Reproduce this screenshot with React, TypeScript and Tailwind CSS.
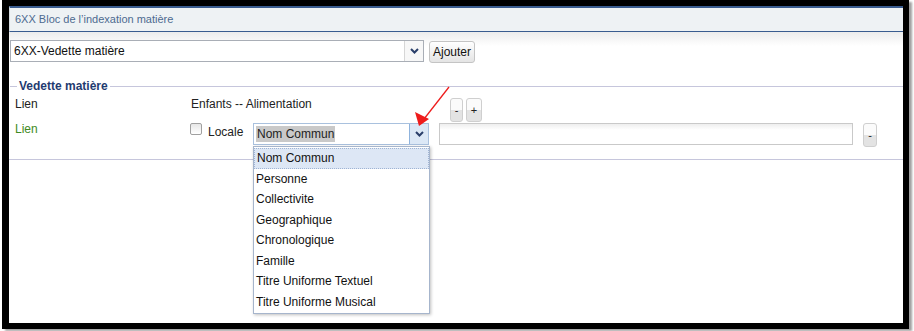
import React from 'react';

const OPTIONS = [
    'Nom Commun',
    'Personne',
    'Collectivite',
    'Geographique',
    'Chronologique',
    'Famille',
    'Titre Uniforme Textuel',
    'Titre Uniforme Musical',
];

const Chevron: React.FC = () => (
    <svg width="9" height="6" viewBox="0 0 9 6">
        <path d="M1 1 L4.5 4.5 L8 1" fill="none" stroke="#2a3f6a" strokeWidth="2" />
    </svg>
);

const SmallButton: React.FC<{ label: string; width: string }> = ({ label, width }) => (
    <div
        className={`${width} h-[24px] flex items-center justify-center rounded-[3px] border border-[#cfcfcf] bg-[linear-gradient(#fbfbfb_50%,#e3e3e3_50%)] text-[11px] text-[#222]`}
    >
        {label}
    </div>
);

export default function App() {
    return (
        <div className="relative w-[914px] h-[331px] bg-white font-['Liberation_Sans',Arial,sans-serif] overflow-hidden">
            <div className="ml-[2px] w-[907px] h-[329px] border-l-[7px] border-t-[6px] border-r-[6px] border-b-[6px] border-black shadow-[3px_2px_2px_#a0a0a0] bg-white">
                <div className="h-[26px] border-t-2 border-b border-[#3a5c8f] border-l border-l-[#d8dde2] bg-[#eef2f4] flex items-center pl-[5px] text-[11px] text-[#4d6a90]">
                    6XX Bloc de l’indexation matière
                </div>
                <div className="bg-[linear-gradient(to_bottom,#ececec,#ffffff_14px)] pt-[8px]">
                    <div className="flex items-start">
                        <div className="ml-[1px] w-[414px] h-[22px] flex border border-[#a9aeb6] bg-white">
                            <div className="flex-1 flex items-center pl-[3px] text-[12px] text-[#111]">
                                6XX-Vedette matière
                            </div>
                            <div className="w-[19px] flex items-center justify-center border-l border-[#d6d6d6] bg-[#f7f7f7]">
                                <Chevron />
                            </div>
                        </div>
                        <div className="ml-[5px] mt-[1px] w-[46px] h-[22px] flex items-center justify-center rounded-[3px] border border-[#c4c4c4] bg-[linear-gradient(#ffffff,#e4e4e4)] text-[12px] text-[#111]">
                            Ajouter
                        </div>
                    </div>

                    <div className="mt-[16px] h-[14px] flex items-center">
                        <div className="ml-[1px] w-[7px] h-px bg-[#c6c6dc]" />
                        <div className="px-[2px] text-[12px] font-bold text-[#1f3b70] leading-[14px]">
                            Vedette matière
                        </div>
                        <div className="flex-1 h-px bg-[#c6c6dc]" />
                    </div>

                    <div className="pl-[6px] mt-[4px] flex items-start h-[25px]">
                        <div className="w-[176px] text-[12px] leading-[14px] text-[#222]">Lien</div>
                        <div className="w-[259px] text-[12px] leading-[14px] text-[#222]">
                            Enfants -- Alimentation
                        </div>
                        <div className="mt-[1px] flex gap-[3px]">
                            <SmallButton label="-" width="w-[13px]" />
                            <SmallButton label="+" width="w-[16px]" />
                        </div>
                    </div>

                    <div className="pl-[6px] flex items-start h-[25px]">
                        <div className="w-[175px] text-[12px] leading-[14px] text-[#3f8a24]">Lien</div>
                        <div className="mt-[1px] w-[12px] h-[12px] rounded-[2px] border border-[#a0a0a0] bg-[linear-gradient(#e6e6e6,#ffffff)]" />
                        <div className="ml-[6px] mt-[3px] w-[45px] text-[12px] leading-[14px] text-[#222]">Locale</div>
                        <div className="relative mt-[1px]">
                            <div className="w-[176px] h-[22px] flex border border-[#a9c1de] bg-white">
                                <div className="flex-1 flex items-center pl-[2px]">
                                    <span className="bg-[#c9c9c9] px-[1px] text-[12px] leading-[16px] text-[#222]">
                                        Nom Commun
                                    </span>
                                </div>
                                <div className="w-[19px] flex items-center justify-center border-l border-[#8fb3dd] bg-[#dce8f6]">
                                    <Chevron />
                                </div>
                            </div>
                            <div className="absolute left-0 top-[23px] z-10 w-[177px] border border-[#a6b5cc] bg-white py-px shadow-[1px_1px_3px_rgba(0,0,0,0.25)]">
                                {OPTIONS.map((o, i) => (
                                    <div
                                        key={o}
                                        className={`h-[20.5px] flex items-center pl-[2px] text-[12px] text-[#111] ${
                                            i === 0
                                                ? 'bg-[#dde7f5] border border-dotted border-[#9fb4d4]'
                                                : ''
                                        }`}
                                    >
                                        {o}
                                    </div>
                                ))}
                            </div>
                        </div>
                        <div className="ml-[10px] mt-[1px] w-[414px] h-[22px] border border-[#c9c9c9] bg-[linear-gradient(#eeeeee,#ffffff_6px)]" />
                        <div className="ml-[10px] mt-[1px]">
                            <SmallButton label="-" width="w-[14px]" />
                        </div>
                    </div>

                    <div className="mt-[12px] h-px bg-[#c6c6dc]" />
                </div>
            </div>

            <svg className="absolute left-0 top-0 pointer-events-none" width="914" height="331">
                <line x1="449" y1="87" x2="424" y2="119" stroke="#ee1c1c" strokeWidth="1.3" />
                <polygon points="419,126 415,112 429,119" fill="#ee1c1c" />
            </svg>
        </div>
    );
}
